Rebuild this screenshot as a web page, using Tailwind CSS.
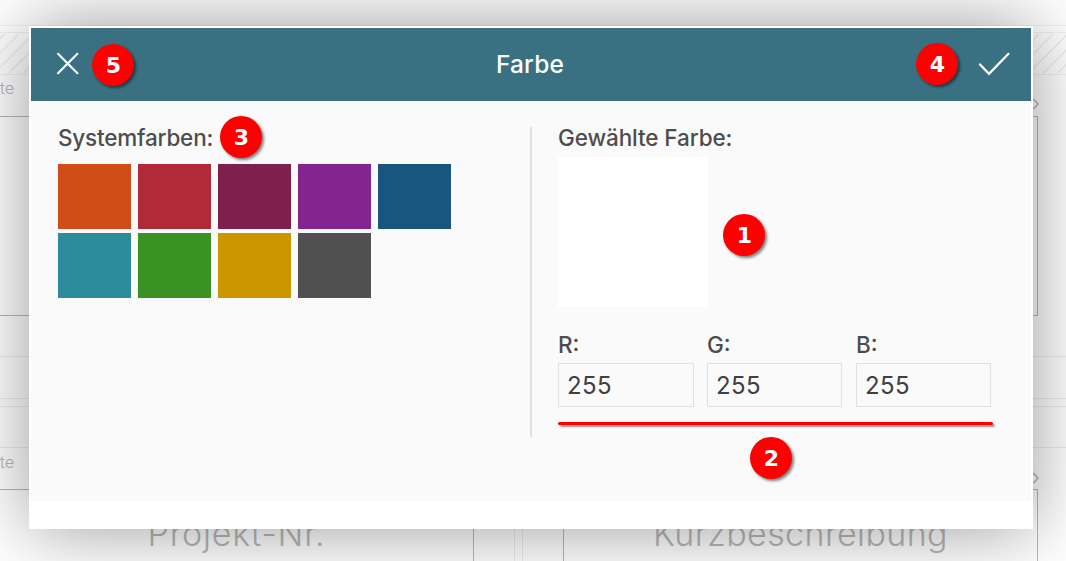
<!DOCTYPE html>
<html lang="de">
<head>
<meta charset="utf-8">
<title>Farbe</title>
<script src="https://cdn.jsdelivr.net/npm/@tailwindcss/browser@4"></script>
</head>
<body class="relative w-[1066px] h-[561px] overflow-hidden bg-white font-['Inter',sans-serif]">
<!-- form behind the dialog -->
<div class="h-full flex flex-col overflow-hidden border-[#ededed] text-[#b8b8b8] font-light" aria-hidden="true">
  <div class="h-[26px] shrink-0 border-b border-[#f0f0f0]"></div>
  <div class="mt-1.5 h-[43px] shrink-0 border-y border-[#f0f0f0]">
    <svg class="block" width="1066" height="41">
      <defs><pattern id="hatch" width="10.3" height="10.3" patternUnits="userSpaceOnUse" patternTransform="translate(4 0) rotate(45)"><path d="M1 0V11" stroke="#e8e8e8" stroke-width="1.1"/></pattern></defs>
      <rect y="1" width="1066" height="39" fill="url(#hatch)"/>
    </svg>
  </div>
  <div class="h-[41px] shrink-0 flex justify-between pr-[27px]">
    <span class="text-[16.5px] leading-[26px]">te</span>
    <svg class="mt-[22px]" width="10" height="14" fill="none" stroke="#b4b4b4" stroke-width="1.3"><path d="M3 2Q5 2 9 7Q5 12 3 12"/></svg>
  </div>
  <div class="h-[200px] w-[1038px] shrink-0 border border-l-0 border-[#b8b8b8]"></div>
  <div class="h-[41px] shrink-0 border-b border-[#ededed]"></div>
  <div class="h-[42px] shrink-0 border-b border-[#ededed]"></div>
  <div class="mt-[7px] flex-1 grid grid-cols-[515px_1fr] gap-x-[7px]">
    <div class="border-t border-r border-[#ededed] flex flex-col">
      <div class="h-[41px] shrink-0 border-b border-[#ededed]"></div>
      <div class="h-[41px] shrink-0 text-[16.5px] leading-[28px]">te</div>
      <div class="flex-1 w-[474px] border-t border-r border-[#b8b8b8] flex justify-center items-end text-[34px] leading-[54px] tracking-[0.8px]"><span>Projekt-Nr.</span></div>
    </div>
    <div class="border-t border-l border-[#ededed] flex flex-col">
      <div class="h-[41px] shrink-0 border-b border-[#ededed]"></div>
      <div class="h-[41px] shrink-0 flex justify-end pr-[27px]"><svg class="mt-[23px]" width="10" height="14" fill="none" stroke="#b4b4b4" stroke-width="1.3"><path d="M3 2Q5 2 9 7Q5 12 3 12"/></svg></div>
      <div class="flex-1 ml-[40px] w-[475px] border border-b-0 border-[#b8b8b8] flex justify-center items-end text-[34px] leading-[54px] tracking-[0.4px]"><span>Kurzbeschreibung</span></div>
    </div>
  </div>
</div>

<!-- dialog -->
<div class="absolute left-[29px] top-[26px] w-[1004px] h-[503px] bg-white p-0.5 shadow-[0_0_70px_rgba(0,0,0,0.4)]">
  <header class="h-[73px] bg-[#3a7182] text-white flex items-center justify-between pl-[25px] pr-5">
    <svg class="-mt-0.5" width="24" height="24" fill="none" stroke="currentColor" stroke-width="2.1" stroke-linecap="round"><path d="M2 1.8L21.4 21.2M21.4 1.8L2 21.2"/></svg>
    <h1 class="pl-[3px] text-[24.5px] font-[450] tracking-[0.2px]">Farbe</h1>
    <svg class="-mt-0.5" width="34" height="26" fill="none" stroke="currentColor" stroke-width="2.2" stroke-linecap="round" stroke-linejoin="miter"><path d="M3 13.4L12 22.8L31.5 2.8"/></svg>
  </header>
  <main class="h-[400px] bg-[#fafafa] flex pt-[26px] pl-[27px] text-[#4d4d4d] text-[22.5px] font-[450]">
    <section class="w-[474px] h-[310px] border-r-2 border-[#e0e0e0] box-border">
      <h2 class="leading-[22px] tracking-[-0.2px]">Systemfarben:</h2>
      <div class="mt-[15px] grid grid-cols-[repeat(5,73px)] gap-x-[7px] gap-y-1">
        <div class="h-[65px] bg-[#d14d17]"></div>
        <div class="h-[65px] bg-[#b22937]"></div>
        <div class="h-[65px] bg-[#7f1f4b]"></div>
        <div class="h-[65px] bg-[#83248f]"></div>
        <div class="h-[65px] bg-[#18567f]"></div>
        <div class="h-[65px] bg-[#2c8c9c]"></div>
        <div class="h-[65px] bg-[#3a9124]"></div>
        <div class="h-[65px] bg-[#cc9600]"></div>
        <div class="h-[65px] bg-[#505050]"></div>
      </div>
    </section>
    <section class="pl-[26px]">
      <h2 class="leading-[22px] tracking-[-0.1px]">Gewählte Farbe:</h2>
      <div class="mt-2 size-[150px] bg-white"></div>
      <div class="mt-[26px] grid grid-cols-[136px_135px_135px] gap-x-[13px]">
        <label class="block leading-[24px]">R:<span class="mt-1.5 flex items-center h-[44px] border border-[#e0e0e0] pl-2 pt-0.5 text-[24px] font-normal tracking-[0.4px] text-[#404040]">255</span></label>
        <label class="block leading-[24px]">G:<span class="mt-1.5 flex items-center h-[44px] border border-[#e0e0e0] pl-2 pt-0.5 text-[24px] font-normal tracking-[0.4px] text-[#404040]">255</span></label>
        <label class="block leading-[24px] translate-x-px">B:<span class="mt-1.5 flex items-center h-[44px] border border-[#e0e0e0] pl-2 pt-0.5 text-[24px] font-normal tracking-[0.4px] text-[#404040]">255</span></label>
      </div>
      <div class="mt-[15px] w-[435px] h-[3px] rounded-full bg-[#ff0000] shadow-[2px_2px_2px_rgba(0,0,0,0.4)]"></div>
    </section>
  </main>
</div>

<!-- callouts -->
<div class="font-['DejaVu_Sans',sans-serif] font-bold text-[22px] text-white">
  <span class="absolute left-[723px] top-[214px] size-[42px] pl-px pt-px rounded-full bg-[#ff0000] flex items-center justify-center shadow-[2px_2px_3px_rgba(0,0,0,0.5)]">1</span>
  <span class="absolute left-[750px] top-[437px] size-[42px] pl-px pt-px rounded-full bg-[#ff0000] flex items-center justify-center shadow-[2px_2px_3px_rgba(0,0,0,0.5)]">2</span>
  <span class="absolute left-[220px] top-[116px] size-[42px] pl-px pt-px rounded-full bg-[#ff0000] flex items-center justify-center shadow-[2px_2px_3px_rgba(0,0,0,0.5)]">3</span>
  <span class="absolute left-[916px] top-[43px] size-[42px] pl-px pt-px rounded-full bg-[#ff0000] flex items-center justify-center shadow-[2px_2px_3px_rgba(0,0,0,0.5)]">4</span>
  <span class="absolute left-[92px] top-[44px] size-[42px] pl-px pt-px rounded-full bg-[#ff0000] flex items-center justify-center shadow-[2px_2px_3px_rgba(0,0,0,0.5)]">5</span>
</div>
</body>
</html>
